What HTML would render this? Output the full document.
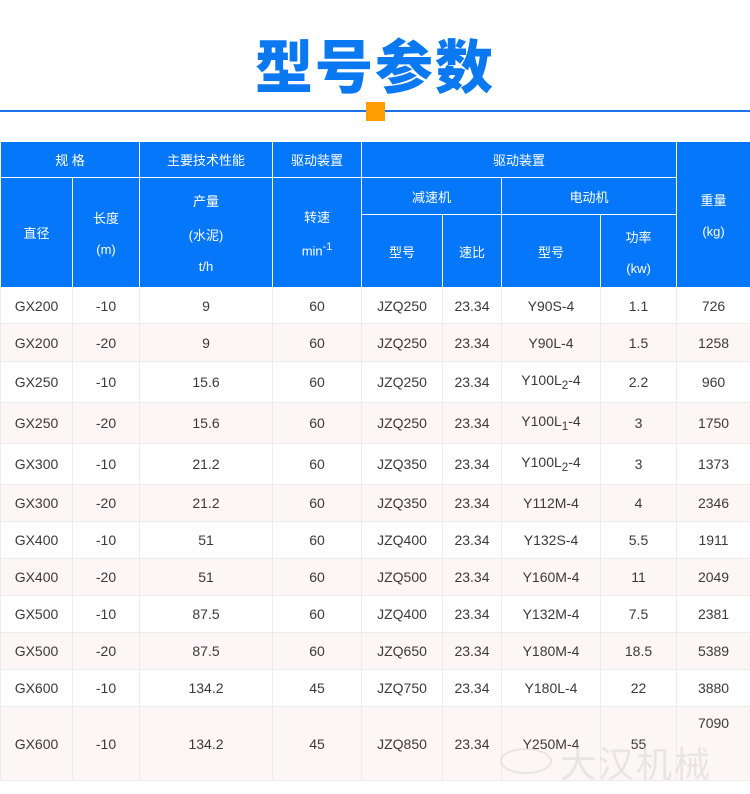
<!DOCTYPE html>
<html><head><meta charset="utf-8"><style>
body{margin:0;width:750px;height:794px;background:#fff;position:relative;overflow:hidden;font-family:"Liberation Sans","Noto Sans CJK SC",sans-serif}
.title{position:absolute;top:28px;left:0;width:750px;text-align:center;font-size:58px;font-weight:900;color:#0a78f0;letter-spacing:2px;font-family:"Noto Sans CJK SC",sans-serif;line-height:70px}
.line{position:absolute;top:110px;left:0;width:750px;height:2px;background:#1a73e8}
.sq{position:absolute;top:102px;left:366px;width:19px;height:19px;background:#ff9c00}
table{position:absolute;top:141px;left:0;width:750px;border-collapse:collapse;table-layout:fixed;font-size:14px}
td{text-align:center;padding:0;color:#3a3a3a;border:1px solid #ececec}
thead td{background:#0577fb;color:#fff;border:1px solid #fff;font-size:13px}
tbody tr:nth-child(even) td{background:#fdf6f6}
.wm{position:absolute;left:560px;top:736px;font-size:36px;color:rgba(215,215,215,.55);font-family:"Noto Sans CJK SC",sans-serif;letter-spacing:2px}
.wl{position:absolute;left:500px;top:748px;width:48px;height:22px;border:2px solid rgba(215,215,215,.55);border-radius:50%}
</style></head><body>
<div class="title">型号参数</div>
<div class="line"></div><div class="sq"></div>
<table>
<colgroup><col style="width:72px"><col style="width:67px"><col style="width:133px"><col style="width:89px"><col style="width:81px"><col style="width:59px"><col style="width:99px"><col style="width:76px"><col style="width:74px"></colgroup>
<thead>
<tr style="height:36px"><td colspan="2">规 格</td><td>主要技术性能</td><td>驱动装置</td><td colspan="4">驱动装置</td><td rowspan="3">重量<br><br>(kg)</td></tr>
<tr style="height:37px"><td rowspan="2">直径</td><td rowspan="2">长度<br><br>(m)</td><td rowspan="2">产量<br><br>(水泥)<br><br>t/h</td><td rowspan="2">转速<br><br>min<sup>-1</sup></td><td colspan="2">减速机</td><td colspan="2">电动机</td></tr>
<tr style="height:73px"><td>型号</td><td>速比</td><td>型号</td><td>功率<br><br>(kw)</td></tr>
</thead>
<tbody>
<tr style="height:36px"><td>GX200</td><td>-10</td><td>9</td><td>60</td><td>JZQ250</td><td>23.34</td><td>Y90S-4</td><td>1.1</td><td>726</td></tr>
<tr style="height:38px"><td>GX200</td><td>-20</td><td>9</td><td>60</td><td>JZQ250</td><td>23.34</td><td>Y90L-4</td><td>1.5</td><td>1258</td></tr>
<tr style="height:41px"><td>GX250</td><td>-10</td><td>15.6</td><td>60</td><td>JZQ250</td><td>23.34</td><td>Y100L<sub>2</sub>-4</td><td>2.2</td><td>960</td></tr>
<tr style="height:41px"><td>GX250</td><td>-20</td><td>15.6</td><td>60</td><td>JZQ250</td><td>23.34</td><td>Y100L<sub>1</sub>-4</td><td>3</td><td>1750</td></tr>
<tr style="height:41px"><td>GX300</td><td>-10</td><td>21.2</td><td>60</td><td>JZQ350</td><td>23.34</td><td>Y100L<sub>2</sub>-4</td><td>3</td><td>1373</td></tr>
<tr style="height:37px"><td>GX300</td><td>-20</td><td>21.2</td><td>60</td><td>JZQ350</td><td>23.34</td><td>Y112M-4</td><td>4</td><td>2346</td></tr>
<tr style="height:37px"><td>GX400</td><td>-10</td><td>51</td><td>60</td><td>JZQ400</td><td>23.34</td><td>Y132S-4</td><td>5.5</td><td>1911</td></tr>
<tr style="height:37px"><td>GX400</td><td>-20</td><td>51</td><td>60</td><td>JZQ500</td><td>23.34</td><td>Y160M-4</td><td>11</td><td>2049</td></tr>
<tr style="height:37px"><td>GX500</td><td>-10</td><td>87.5</td><td>60</td><td>JZQ400</td><td>23.34</td><td>Y132M-4</td><td>7.5</td><td>2381</td></tr>
<tr style="height:37px"><td>GX500</td><td>-20</td><td>87.5</td><td>60</td><td>JZQ650</td><td>23.34</td><td>Y180M-4</td><td>18.5</td><td>5389</td></tr>
<tr style="height:37px"><td>GX600</td><td>-10</td><td>134.2</td><td>45</td><td>JZQ750</td><td>23.34</td><td>Y180L-4</td><td>22</td><td>3880</td></tr>
<tr style="height:74px"><td>GX600</td><td>-10</td><td>134.2</td><td>45</td><td>JZQ850</td><td>23.34</td><td>Y250M-4</td><td>55</td><td style="vertical-align:top;padding-top:8px">7090</td></tr>
</tbody></table>
<div class="wl"></div>
<div class="wm">大汉机械</div>
</body></html>
